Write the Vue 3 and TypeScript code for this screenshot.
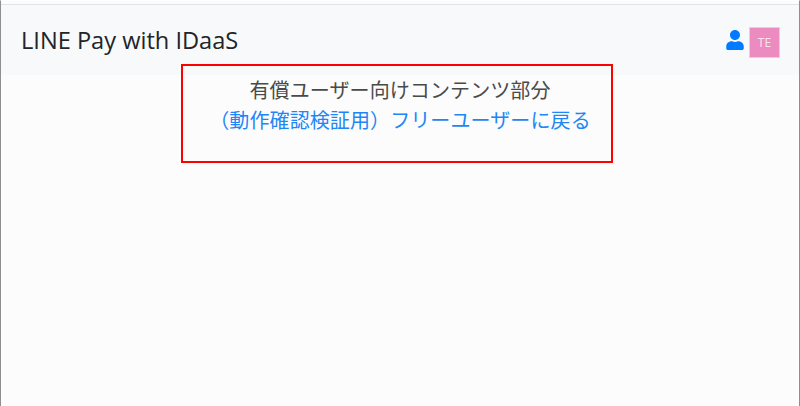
<script setup lang="ts">
const title = "LINE Pay with IDaaS";
const initials = "TE";
</script>

<template>
  <div class="page">
    <nav class="navbar">
      <span class="brand">{{ title }}</span>
      <div class="user">
        <svg class="user__icon" viewBox="0 0 448 512" width="18" height="20" aria-hidden="true">
          <path
            fill="currentColor"
            d="M224 256c70.700 0 128-57.300 128-128S294.700 0 224 0 96 57.300 96 128s57.300 128 128 128zm89.600 32h-16.700c-22.200 10.200-46.900 16-72.900 16s-50.600-5.800-72.900-16h-16.700C60.200 288 0 348.200 0 422.400V464c0 26.500 21.500 48 48 48h352c26.500 0 48-21.500 48-48v-41.600c0-74.200-60.200-134.400-134.400-134.400z"
          />
        </svg>
        <span class="avatar">{{ initials }}</span>
      </div>
    </nav>
    <main class="content">
      <div class="paid-box">
        <div>有償ユーザー向けコンテンツ部分</div>
        <a class="paid-box__link" href="#">（動作確認検証用）フリーユーザーに戻る</a>
      </div>
    </main>
  </div>
</template>

<style scoped>
.page {
  box-sizing: border-box;
  height: 406px;
  overflow: hidden;
  background: #fcfcfc;
  border-top: 1px solid #fff;
  border-left: 1px solid #8f8f8f;
  border-right: 1px solid #8f8f8f;
  font-family: "Open Sans", "Noto Sans CJK JP", sans-serif;
  color: #212529;
}
.navbar {
  box-sizing: border-box;
  height: 71px;
  margin-top: 3px;
  padding: 0 19px 0 20px;
  display: flex;
  align-items: center;
  justify-content: space-between;
  background: #f8f9fa;
  border-top: 1px solid #e2e3e4;
}
.brand {
  font-size: 23.6px;
  color: #212529;
}
.user {
  display: flex;
  align-items: flex-start;
  gap: 5px;
  margin-top: 4px;
}
.user__icon {
  color: #007bff;
  margin-top: 3px;
}
.avatar {
  box-sizing: border-box;
  width: 31px;
  height: 31px;
  display: flex;
  align-items: center;
  justify-content: center;
  background: #ec8bc0;
  border: 1px solid #f6c6e0;
  color: #fbe3f0;
  font-size: 12px;
}
.content {
  display: flex;
  justify-content: center;
  margin-top: -11px;
  position: relative;
}
.paid-box {
  box-sizing: border-box;
  width: 432px;
  height: 99px;
  margin-left: -6px;
  padding: 9px 0 0 6px;
  border: 2px solid #f00;
  text-align: center;
  font-size: 20px;
  letter-spacing: 0.1px;
  line-height: 30px;
  font-family: "Noto Sans CJK JP", sans-serif;
  color: #4a4a4a;
}
.paid-box__link {
  color: #1e87f5;
  text-decoration: none;
}
</style>
